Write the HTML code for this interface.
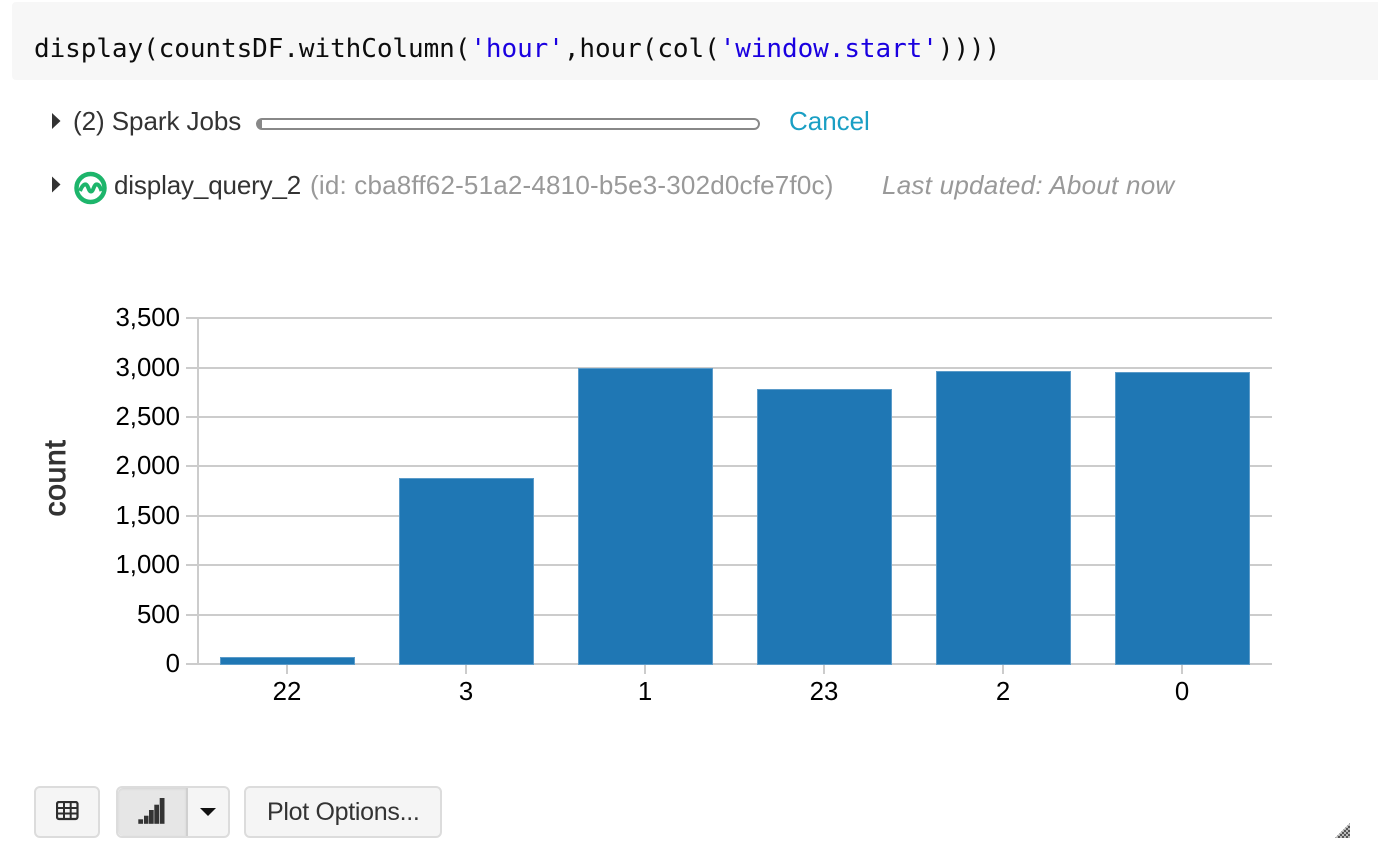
<!DOCTYPE html>
<html><head><meta charset="utf-8">
<style>
html,body{margin:0;padding:0;background:#fff;width:1378px;height:852px;overflow:hidden;font-family:"Liberation Sans",sans-serif}
.a{position:absolute;white-space:pre;line-height:1}
.btn{position:absolute;box-sizing:border-box;background:#f5f5f5;border:2px solid #dcdcdc;border-radius:6px}
</style></head><body>
<div style="position:absolute;left:12px;top:2px;width:1366px;height:78px;background:#f7f7f7;border-radius:4px 0 0 4px"></div>
<div class="a" style="left:34px;top:34px;font:26px 'DejaVu Sans Mono',monospace;color:#0d0d0d;letter-spacing:-.07px">display(countsDF.withColumn(<span style="color:#1a00e0">'hour'</span>,hour(col(<span style="color:#1a00e0">'window.start'</span>))))</div>

<svg style="position:absolute;left:0;top:0" width="120" height="220">
<path d="M52 113L60.500 121L52 129Z" fill="#333"/>
<path d="M52 176.500L60.500 184.500L52 192.500Z" fill="#333"/>
<circle cx="90.500" cy="188" r="14" fill="none" stroke="#1db56b" stroke-width="4.500"/>
<path d="M80 191C82 186 84 184 86 184.500C88.500 185.500 88.500 191.500 91 191.500C93.500 191.500 93.500 185.500 96 184.500C98 184 100 186 101.500 191" fill="none" stroke="#1db56b" stroke-width="4"/>
</svg>
<div class="a" style="left:73px;top:108px;font-size:26px;color:#333;letter-spacing:-.06px">(2) Spark Jobs</div>
<div style="position:absolute;left:256px;top:118px;width:504px;height:12px;box-sizing:border-box;border:2px solid #888;border-left-width:6px;border-radius:6px"></div>
<div class="a" style="left:789px;top:108px;font-size:26px;color:#1a9fc4;letter-spacing:-.02px">Cancel</div>
<div class="a" style="left:114px;top:172px;font-size:26px;color:#333;letter-spacing:-.15px">display_query_2</div>
<div class="a" style="left:310px;top:172px;font-size:26px;color:#999;letter-spacing:.19px">(id: cba8ff62-51a2-4810-b5e3-302d0cfe7f0c)</div>
<div class="a" style="left:882px;top:172px;font-size:26px;color:#999;font-style:italic;letter-spacing:.25px">Last updated: About now</div>

<svg style="position:absolute;left:0;top:290px" width="1378" height="440" font-family="'Liberation Sans',sans-serif">
<g fill="none" stroke="#ccc" stroke-width="2">
<path d="M186 28H1272M186 78H1272M186 127H1272M186 176H1272M186 226H1272M186 275H1272M186 325H1272M186 374H1272M198 28V374"/>
<path d="M287 374V384M466 374V384M645 374V384M824 374V384M1003 374V384M1182 374V384"/>
</g>
<g fill="#1f77b4" stroke="#5b9bc9" stroke-width="1">
<rect x="220.500" y="367.500" width="134" height="7"/>
<rect x="399.500" y="188.500" width="134" height="186"/>
<rect x="578.500" y="78.500" width="134" height="296"/>
<rect x="757.500" y="99.500" width="134" height="275"/>
<rect x="936.500" y="81.500" width="134" height="293"/>
<rect x="1115.500" y="82.500" width="134" height="292"/>
</g>
<g font-size="25.800" fill="#000" text-anchor="end">
<text x="180" y="36">3,500</text><text x="180" y="86">3,000</text><text x="180" y="135">2,500</text><text x="180" y="184">2,000</text><text x="180" y="234">1,500</text><text x="180" y="283">1,000</text><text x="180" y="333">500</text><text x="180" y="382">0</text>
</g>
<g font-size="25.800" fill="#000" text-anchor="middle">
<text x="287" y="410">22</text><text x="466" y="410">3</text><text x="645" y="410">1</text><text x="824" y="410">23</text><text x="1003" y="410">2</text><text x="1182" y="410">0</text>
</g>
<text transform="translate(65 188) rotate(-90)" font-size="30" fill="#333" stroke="#333" stroke-width=".9" text-anchor="middle" letter-spacing=".7">count</text>
</svg>

<div class="btn" style="left:34px;top:786px;width:66px;height:52px"></div>
<svg style="position:absolute;left:56px;top:801px" width="23" height="20"><rect x="1" y="1" width="20.500" height="17" rx="2" fill="none" stroke="#2e2e2e" stroke-width="2.200"/><path d="M1 7H21.500M1 12.500H21.500M8 1V18M14.700 1V18" stroke="#2e2e2e" stroke-width="2" fill="none"/></svg>
<div class="btn" style="left:116px;top:786px;width:114px;height:52px"></div>
<div style="position:absolute;left:118px;top:788px;width:68px;height:48px;background:#e6e6e6;border-right:2px solid #d0d0d0;border-radius:5px 0 0 5px;box-shadow:inset 0 1px 2px rgba(0,0,0,.08)"></div>
<svg style="position:absolute;left:136px;top:794px" width="32" height="34"><g fill="#333"><rect x="2.300" y="25.300" width="4.800" height="4.500"/><rect x="8" y="21.700" width="4.500" height="8.100"/><rect x="13" y="16" width="4.700" height="13.800"/><rect x="18.300" y="10.700" width="4.700" height="19.100"/><rect x="23.700" y="4" width="4.800" height="25.800"/></g></svg>
<svg style="position:absolute;left:198px;top:806px" width="20" height="12"><path d="M2 2H18L10 10Z" fill="#111"/></svg>
<div class="btn" style="left:244px;top:786px;width:198px;height:52px"></div>
<div class="a" style="left:267px;top:800px;font-size:25px;color:#333;letter-spacing:-.3px">Plot Options...</div>

<svg style="position:absolute;left:1330px;top:820px" width="30" height="24">
<defs><pattern id="p" width="4" height="4" patternUnits="userSpaceOnUse"><rect width="4" height="4" fill="#bbb"/><rect width="2" height="2" fill="#555"/><rect x="2" y="2" width="2" height="2" fill="#555"/></pattern></defs>
<path d="M5 18L20 3V18Z" fill="url(#p)"/>
</svg>
</body></html>
